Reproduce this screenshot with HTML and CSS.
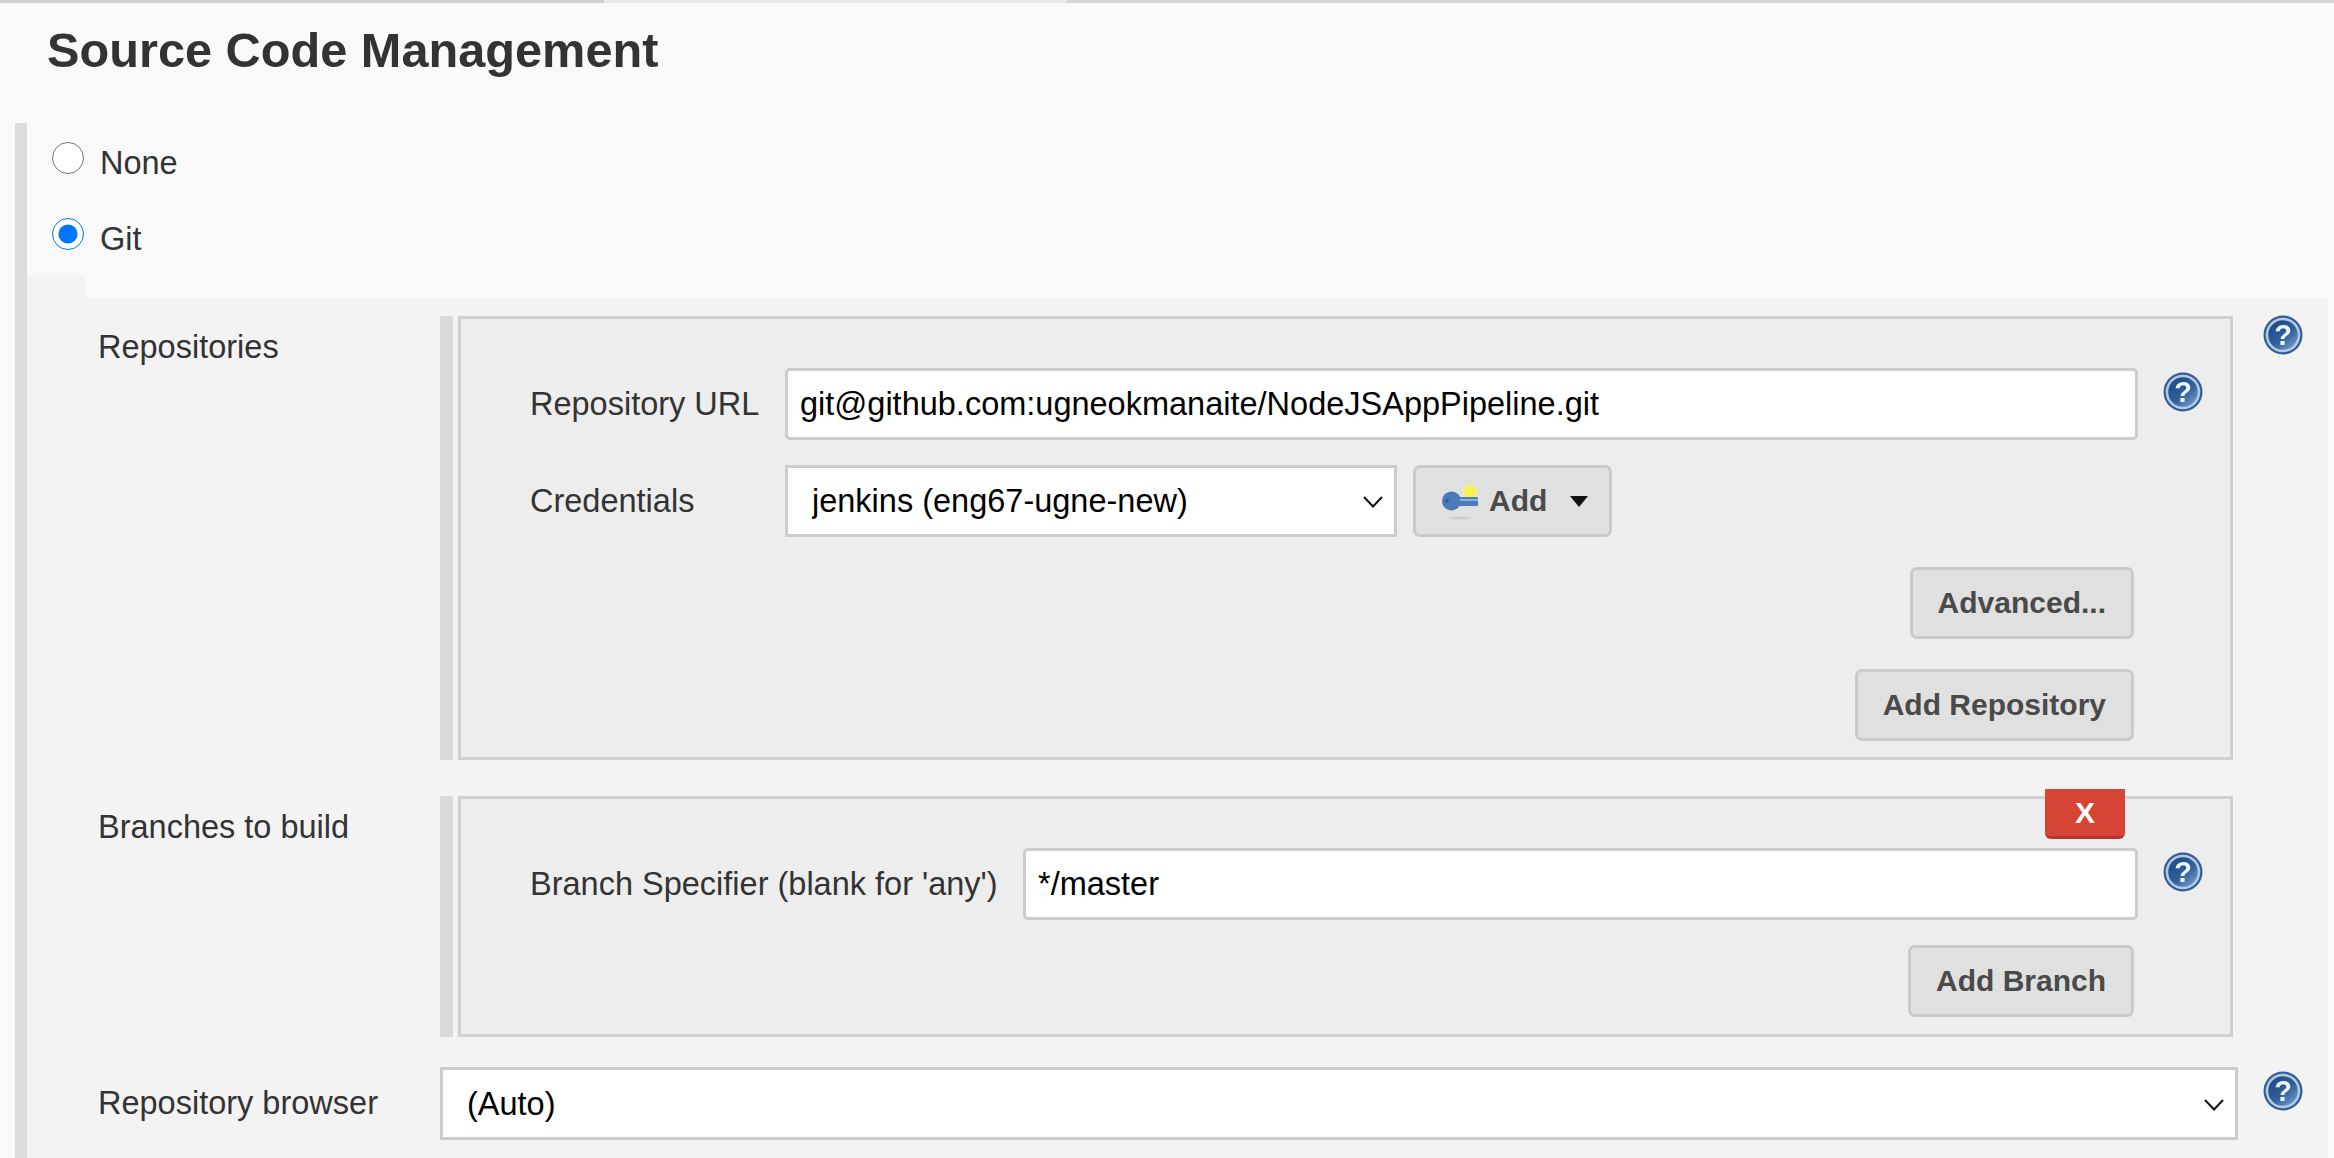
FILE: index.html

```html
<!DOCTYPE html>
<html lang="en">
<head>
  <meta charset="UTF-8" />
  <meta name="viewport" content="width=device-width, initial-scale=1.0"/>
  <title>Source Code Management</title>
  <link rel="stylesheet" href="styles.css">
</head>
<body>
  <svg class="sprites" width="0" height="0">
    <defs>
      <linearGradient id="helpFill" x1="0.15" y1="0.1" x2="0.85" y2="0.9">
        <stop offset="0" stop-color="#1d4a88"/>
        <stop offset="0.55" stop-color="#2f609b"/>
        <stop offset="1" stop-color="#6f98c8"/>
      </linearGradient>
      <radialGradient id="keyGlow">
        <stop offset="0" stop-color="#f6f13c"/>
        <stop offset="0.7" stop-color="#f6f25c"/>
        <stop offset="1" stop-color="#f6f2a0" stop-opacity="0"/>
      </radialGradient>
      <radialGradient id="keyShadow">
        <stop offset="0" stop-color="#c2c2c2"/>
        <stop offset="1" stop-color="#c2c2c2" stop-opacity="0"/>
      </radialGradient>
      <symbol id="help" viewBox="0 0 40 40">
        <circle cx="20" cy="20" r="19.5" fill="#2f5f98"/>
        <circle cx="20" cy="20" r="16" fill="url(#helpFill)" stroke="#b5c9e0" stroke-width="2.5"/>
        <text x="20" y="30" text-anchor="middle" class="help-mark">?</text>
      </symbol>
      <symbol id="chevron" viewBox="0 0 20 12">
        <path d="M1 1 L10 10.5 L19 1" fill="none" stroke="#111" stroke-width="2"/>
      </symbol>
    </defs>
  </svg>

  <div class="tabbar">
    <div class="tab tab-done"></div>
    <div class="tab tab-current"></div>
    <div class="tab tab-rest"></div>
  </div>

  <h1>Source Code Management</h1>

  <section class="scm">
    <label class="radio-row"><input type="radio" name="scm" /> <span>None</span></label>
    <label class="radio-row"><input type="radio" name="scm" checked /> <span>Git</span></label>
    <div class="notch"></div>

    <div class="git-panel">
      <div class="row">
        <div class="row-label">Repositories</div>
        <div class="repeat">
          <div class="repeat-bar"></div>
          <div class="repeat-box">
            <div class="field">
              <label class="field-label">Repository URL</label>
              <input class="text-input url-input" type="text" value="git@github.com:ugneokmanaite/NodeJSAppPipeline.git" />
              <svg class="help"><use href="#help"/></svg>
            </div>
            <div class="field field-gap">
              <label class="field-label">Credentials</label>
              <div class="select-wrap cred-select">
                <select class="select"><option>jenkins (eng67-ugne-new)</option></select>
                <svg class="chevron"><use href="#chevron"/></svg>
              </div>
              <button class="btn add-btn" type="button">
                <svg class="key" viewBox="0 0 36 38">
                  <ellipse cx="18" cy="36" rx="15" ry="2" fill="url(#keyShadow)"/>
                  <circle cx="28" cy="10" r="8.5" fill="url(#keyGlow)"/>
                  <rect x="12" y="15" width="24" height="9" rx="1" fill="#4a7cbd"/>
                  <circle cx="9.5" cy="19" r="9.5" fill="#4a7aba"/>
                  <rect x="18" y="17" width="18" height="2" fill="#8db2dc"/>
                  <circle cx="5" cy="19" r="2" fill="#33609a"/>
                </svg>
                <span>Add</span>
                <span class="caret"></span>
              </button>
            </div>
            <div class="btn-row"><button class="btn" type="button">Advanced...</button></div>
            <div class="btn-row"><button class="btn" type="button">Add Repository</button></div>
          </div>
        </div>
        <svg class="help row-help row-help-top"><use href="#help"/></svg>
      </div>

      <div class="row row-branches">
        <div class="row-label row-label-tight">Branches to build</div>
        <div class="repeat">
          <div class="repeat-bar"></div>
          <div class="repeat-box repeat-box-branch">
            <button class="delete-btn" type="button">X</button>
            <div class="field">
              <label class="field-label branch-label">Branch Specifier (blank for 'any')</label>
              <input class="text-input branch-input" type="text" value="*/master" />
              <svg class="help"><use href="#help"/></svg>
            </div>
            <div class="btn-row btn-row-branch"><button class="btn" type="button">Add Branch</button></div>
          </div>
        </div>
      </div>

      <div class="row row-browser">
        <div class="row-label row-label-select">Repository browser</div>
        <div class="select-wrap browser-select">
          <select class="select"><option>(Auto)</option></select>
          <svg class="chevron"><use href="#chevron"/></svg>
        </div>
        <svg class="help row-help row-help-select"><use href="#help"/></svg>
      </div>
    </div>
  </section>
</body>
</html>
```

FILE: styles.css

```css
* { box-sizing: border-box; }
html, body { height: 1158px; overflow: hidden; }
body { margin: 0; background: #f9f9f9; color: #333; font-family: "Liberation Sans", Arial, sans-serif; font-size: 32.5px; line-height: 36px; }

.sprites { display: block; height: 0; }
.help-mark { font-family: "Liberation Sans", Arial, sans-serif; font-size: 29px; font-weight: bold; fill: #eef3f8; }

.tabbar { display: flex; height: 3px; }
.tab-done { width: 604px; background: #cfcfcf; }
.tab-current { width: 463px; background: #e9e9e9; }
.tab-rest { flex: 1; background: #d4d4d4; }

h1 { margin: 19px 0 45px 47px; font-size: 48.7px; line-height: 56px; font-weight: bold; color: #333; }

.scm { margin: 0 6px 0 15px; padding-top: 19px; border-left: 12px solid #dcdcdc; height: 1035px; }
.radio-row { display: flex; gap: 16px; height: 57px; margin: 0 0 19px 25px; padding-top: 3px; }
.radio-row input { width: 32px; height: 32px; margin: -3px 0 0 0; }
.radio-row:nth-of-type(2) { margin-bottom: 0; }
.notch { width: 58px; height: 23px; background: #f3f3f3; }

.git-panel { background: #f3f3f3; padding: 18px 0 18px 71px; }
.row { display: grid; grid-template-columns: 342px 1798px auto; align-items: start; }
.row-branches { margin-top: 36px; }
.row-browser { margin-top: 30px; }
.row-label { padding-top: 13px; }
.row-label-tight { padding-top: 13px; }
.row-label-select { padding-top: 18px; }
.row-help { margin-left: 25px; }
.row-help-top { margin-top: -1px; }
.row-help-select { margin-top: 4px; }

.repeat { display: flex; gap: 5px; margin-right: 5px; }
.repeat-bar { width: 13px; flex: none; background: #d9d9d9; }
.repeat-box { position: relative; flex: 1; min-width: 0; padding: 49px 96px 16px 69px; background: #ededed; border: 3px solid #d0d0d0; }
.repeat-box-branch { padding-bottom: 17px; }

.field { display: flex; align-items: center; height: 72px; position: relative; }
.field-gap { margin-top: 25px; }
.field-label { width: 255px; flex: none; }
.branch-label { width: 493px; }

.text-input { flex: none; height: 72px; padding: 0 12px; border: 3px solid #cccccc; border-radius: 5px; background: #fff; color: #000; font: 32.5px "Liberation Sans", Arial, sans-serif; outline: none; }
.url-input { width: 1353px; }
.branch-input { width: 1115px; }

.help { display: block; width: 40px; height: 40px; flex: none; filter: blur(0.5px); }
.field .help { position: absolute; left: 1633px; top: 4px; }

.select-wrap { position: relative; }
.cred-select { flex: none; width: 612px; }
.browser-select { height: 73px; }
.select { width: 100%; height: 72px; padding: 0 40px 0 24px; border: 3px solid #cccccc; border-radius: 0; background: #fff; color: #000; font: 32.5px "Liberation Sans", Arial, sans-serif; appearance: none; -webkit-appearance: none; outline: none; }
.browser-select .select { height: 73px; }
.chevron { position: absolute; right: 14px; top: 50%; width: 20px; height: 12px; margin-top: -5px; }

.btn { display: inline-flex; align-items: center; height: 72px; padding: 0 25px; border: 3px solid #cacaca; border-radius: 7px; background: #e0e0e0; color: #4a4a4a; font: bold 30px "Liberation Sans", Arial, sans-serif; }
.btn-row { display: flex; justify-content: flex-end; margin-top: 30px; }
.btn-row-branch { margin-top: 25px; }

.add-btn { flex: none; margin-left: 16px; width: 199px; padding: 0 0 0 26px; }
.key { width: 36px; height: 38px; margin-right: 11px; flex: none; }
.caret { margin-left: 23px; border-left: 9px solid transparent; border-right: 9px solid transparent; border-top: 11px solid #111; }

.delete-btn { position: absolute; top: -10px; right: 105px; width: 80px; height: 50px; border: 0; border-bottom: 3px solid #b5352a; border-radius: 0 0 6px 6px; background: #d54435; color: #fff; font: bold 30px "Liberation Sans", Arial, sans-serif; padding: 0; }
```
